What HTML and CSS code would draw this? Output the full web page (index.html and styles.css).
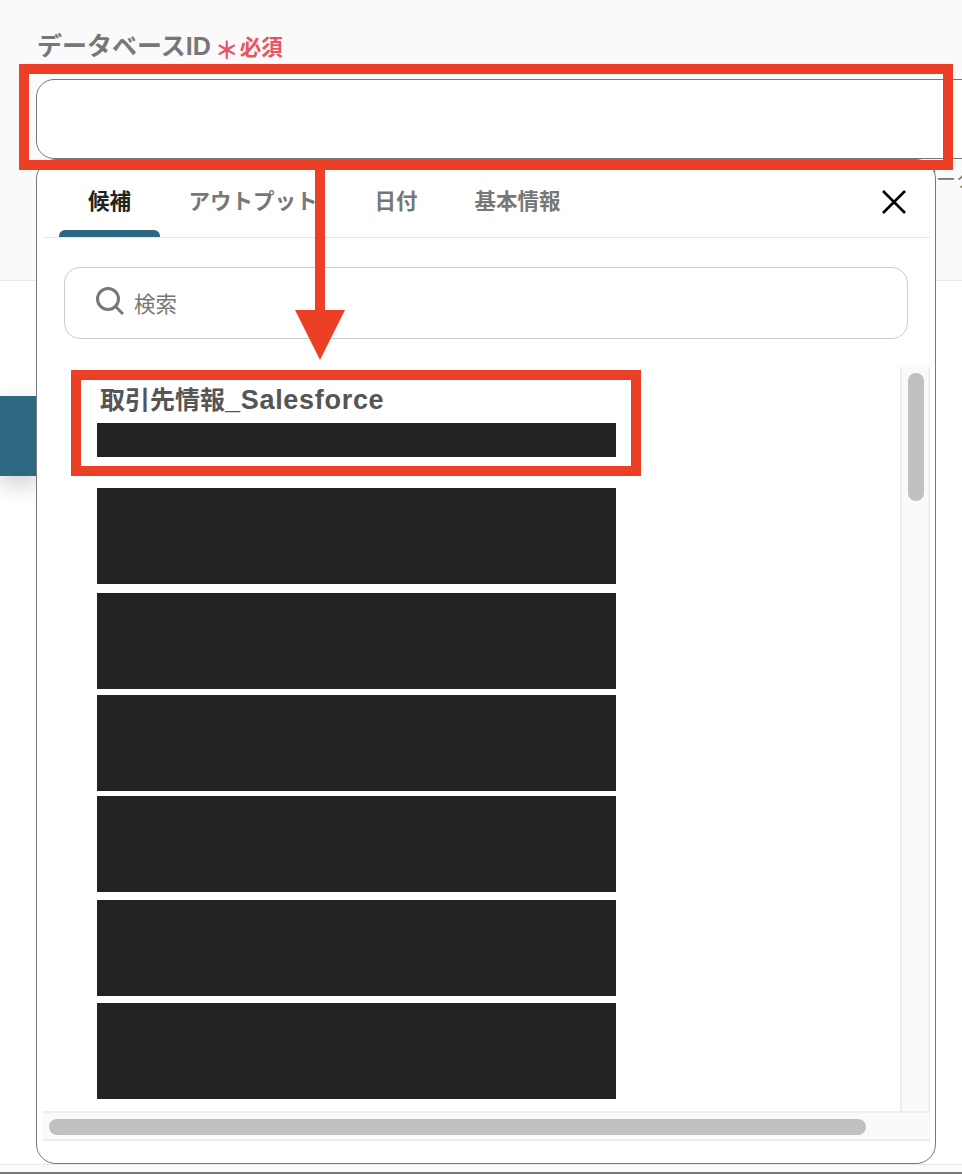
FILE: index.html
```html
<!DOCTYPE html>
<html lang="ja">

<head>
    <meta charset="UTF-8">
    <meta name="viewport" content="width=device-width, initial-scale=1.0">
    <title>データベースID</title>
    <link rel="stylesheet" href="styles.css">
</head>

<body>
    <div class="page">
        <div class="form_area">
            <div class="field_label">
                <span class="label_text">データベースID</span>
                <span class="label_star">＊</span>
                <span class="label_required">必須</span>
            </div>
            <div class="field_input"></div>
            <div class="field_help">データ</div>
        </div>
        <div class="page_main">
            <div class="side_tab"></div>
        </div>
        <div class="page_foot"></div>
    </div>

    <div class="popup">
        <div class="tabs">
            <div class="tab active">候補</div>
            <div class="tab">アウトプット</div>
            <div class="tab">日付</div>
            <div class="tab">基本情報</div>
            <svg class="close_icon" width="24" height="24" viewBox="0 0 24 24">
                <path d="M1 1L23 23M23 1L1 23" stroke="#000" stroke-width="2.6" fill="none" />
            </svg>
        </div>
        <div class="search">
            <svg class="search_icon" width="28" height="28" viewBox="0 0 28 28">
                <circle cx="12" cy="12" r="10.5" stroke="#777" stroke-width="3" fill="none" />
                <path d="M19.5 19.5L27 27" stroke="#777" stroke-width="3" fill="none" />
            </svg>
            <span class="search_text">検索</span>
        </div>
        <div class="list_wrap">
            <div class="list">
                <div class="item_title">取引先情報<span class="item_title_latin">_Salesforce</span></div>
                <div class="bar bar_small"></div>
                <div class="bar gap_31"></div>
                <div class="bar gap_9"></div>
                <div class="bar gap_6"></div>
                <div class="bar gap_5"></div>
                <div class="bar gap_8"></div>
                <div class="bar gap_7"></div>
            </div>
            <div class="track_v">
                <div class="thumb_v"></div>
            </div>
            <div class="track_h">
                <div class="thumb_h"></div>
            </div>
        </div>
    </div>

    <!-- annotations drawn over the screenshot -->
    <div class="mark mark_input"></div>
    <div class="mark mark_item"></div>
    <svg class="mark_arrow" width="50" height="190" viewBox="0 0 50 190">
        <path d="M20 0H30V140H50L25 190L0 140H20Z" fill="#eb4025" />
    </svg>
</body>

</html>
```

FILE: styles.css
```css
* {
    box-sizing: border-box;
}

html,
body {
    margin: 0;
    height: 1174px;
    overflow: hidden;
}

body {
    position: relative;
    background: #fff;
    font-family: "Liberation Sans", "Noto Sans CJK JP", sans-serif;
    color: #777;
}

.page {
    display: flex;
    flex-direction: column;
    height: 1174px;
}

.form_area {
    height: 281px;
    padding: 26px 0 0 36px;
    background: #fafafa;
    border-bottom: 1px solid #e8e8e8;
}

.field_label {
    display: flex;
    align-items: center;
    height: 36px;
    padding-left: 1px;
    margin-bottom: 17px;
}

.label_text {
    font-size: 25px;
    font-weight: 700;
    color: #777;
}

.label_star {
    margin: 8px 0 0 4px;
    font-size: 24px;
    font-weight: 700;
    color: #e8555f;
}

.label_required {
    margin: 3px 0 0 1px;
    font-size: 21.5px;
    font-weight: 700;
    color: #e8555f;
}

.field_input {
    width: 1000px;
    height: 80px;
    background: #fff;
    border: 1px solid #777;
    border-radius: 18px;
}

.field_help {
    padding: 5px 0 0 880px;
    font-size: 20px;
    white-space: nowrap;
}

.page_main {
    flex: 1;
    padding-top: 115px;
}

.side_tab {
    width: 40px;
    height: 80px;
    background: #2e6780;
    box-shadow: 0 8px 24px rgba(0, 0, 0, 0.2);
}

.page_foot {
    height: 10px;
    background: #fafafa;
    border-top: 1px solid #e8e8e8;
    border-bottom: 2px solid #777;
}

/* dropdown under the input */
.popup {
    position: absolute;
    left: 36px;
    top: 159px;
    width: 900px;
    height: 1005px;
    padding: 0 5px 0 6px;
    background: #fff;
    border: 1px solid #777;
    border-radius: 20px;
}

.tabs {
    display: flex;
    height: 78px;
    padding-left: 16px;
    border-bottom: 1px solid #e5e5e5;
}

.tab {
    position: relative;
    height: 77px;
    padding: 25px 28.5px 0;
    font-size: 21.5px;
    font-weight: 700;
    line-height: 34px;
    color: #777;
}

.tab.active {
    padding: 25px 29px 0;
    color: #222;
}

.tab.active::after {
    content: "";
    position: absolute;
    left: 0;
    right: 0;
    bottom: 0;
    height: 7px;
    background: #2e6780;
    border-radius: 6px 6px 0 0;
}

.close_icon {
    margin: 30px 24px 0 auto;
}

.search {
    display: flex;
    align-items: center;
    height: 72px;
    margin: 29px 22px 0 21px;
    padding-left: 31px;
    border: 1px solid #ccc;
    border-radius: 16px;
}

.search_icon {
    margin-top: -4px;
}

.search_text {
    margin: -2px 0 0 10px;
    font-size: 21.5px;
    color: #777;
}

.list_wrap {
    display: grid;
    grid-template-columns: 1fr 30px;
    grid-template-rows: 744px 30px;
    margin-top: 28px;
}

.list {
    padding: 16px 0 0 54px;
}

.item_title {
    height: 34px;
    padding-left: 3px;
    font-size: 25px;
    font-weight: 700;
    line-height: 34px;
    color: #555;
}

.item_title_latin {
    font-size: 27px;
    letter-spacing: 0.7px;
}

.bar {
    width: 519px;
    height: 96px;
    background: #232323;
}

.bar_small {
    height: 34px;
    margin-top: 6px;
}

.gap_5 {
    margin-top: 5px;
}

.gap_6 {
    margin-top: 6px;
}

.gap_7 {
    margin-top: 7px;
}

.gap_8 {
    margin-top: 8px;
}

.gap_9 {
    margin-top: 9px;
}

.gap_31 {
    margin-top: 31px;
}

.track_v {
    padding: 6px 0 0 6px;
    background: #fafafa;
    border-left: 2px solid #eee;
    border-right: 2px solid #eee;
}

.thumb_v {
    width: 16px;
    height: 128px;
    background: #c0c0c0;
    border-radius: 8px;
}

.track_h {
    grid-column: 1 / 3;
    padding: 6px 0 0 6px;
    background: #fafafa;
    border-top: 2px solid #eee;
    border-bottom: 2px solid #eee;
}

.thumb_h {
    width: 817px;
    height: 16px;
    background: #c0c0c0;
    border-radius: 8px;
}

/* red annotations */
.mark {
    position: absolute;
    border: 10px solid #eb4025;
}

.mark_input {
    left: 19px;
    top: 64px;
    width: 934px;
    height: 106px;
}

.mark_item {
    left: 71px;
    top: 370px;
    width: 570px;
    height: 106px;
}

.mark_arrow {
    position: absolute;
    left: 295px;
    top: 170px;
}
```
